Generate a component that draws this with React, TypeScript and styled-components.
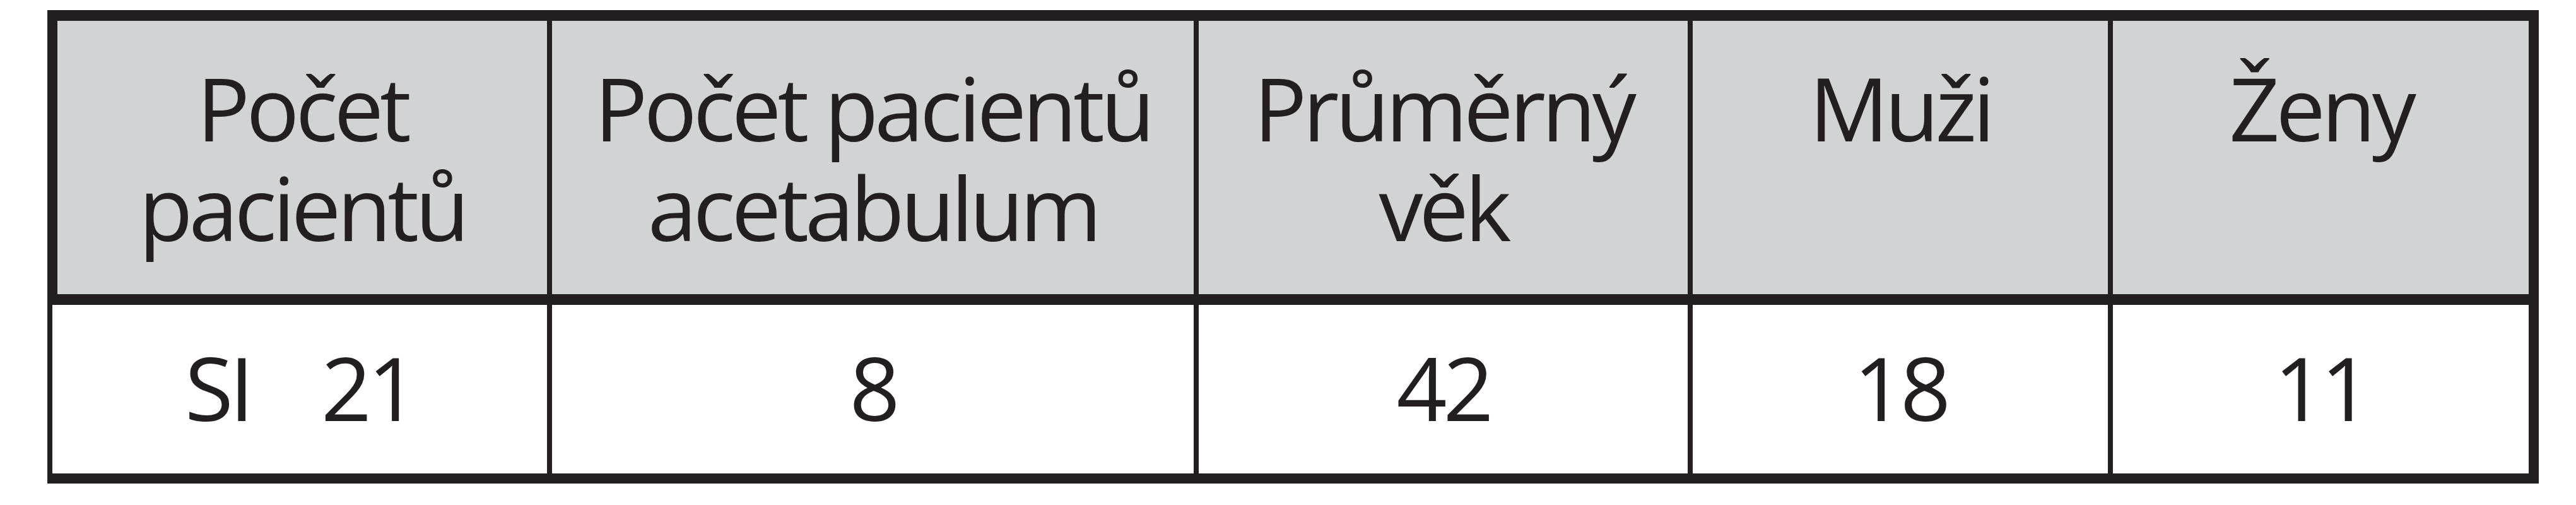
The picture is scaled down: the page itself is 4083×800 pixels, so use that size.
import React from "react";
import styled, { createGlobalStyle } from "styled-components";

const GlobalStyle = createGlobalStyle`
  html, body {
    margin: 0;
    padding: 0;
    background: #ffffff;
  }
  body {
    font-family: "Open Sans", "Noto Sans", "DejaVu Sans", sans-serif;
    color: #231f20;
  }
`;

const Page = styled.div`
  padding: 16px 0 0 75px;
  width: 4083px;
  height: 800px;
  box-sizing: border-box;
  background: #ffffff;
`;

const Table = styled.div`
  display: grid;
  width: 3949px;
  box-sizing: border-box;
  grid-template-columns: 784px 1017px 775px 658px 659px;
  grid-template-rows: 433px 267px;
  column-gap: 8px;
  row-gap: 17px;
  background: #231f20;
  border-style: solid;
  border-color: #231f20;
  border-width: 17px 16px 16px 8px;
`;

const HeadCell = styled.div<{ $first?: boolean }>`
  background: #d1d3d4;
  box-sizing: border-box;
  border-left: ${(p) => (p.$first ? "8px solid #231f20" : "none")};
  padding-top: 58px;
  display: flex;
  flex-direction: column;
  align-items: center;
  font-size: 140px;
  line-height: 158px;
  letter-spacing: -6px;
  color: #231f20;
  white-space: nowrap;
`;

const Line = styled.span`
  display: block;
  text-align: center;
`;

const BodyCell = styled.div`
  background: #ffffff;
  box-sizing: border-box;
  padding-bottom: 8px;
  display: flex;
  align-items: center;
  justify-content: center;
  font-size: 140px;
  letter-spacing: -6px;
  color: #231f20;
  white-space: nowrap;
`;

const Pair = styled.span`
  display: flex;
  gap: 112px;
`;

const headers: string[][] = [
  ["Počet", "pacientů"],
  ["Počet pacientů", "acetabulum"],
  ["Průměrný", "věk"],
  ["Muži"],
  ["Ženy"],
];

const values = ["8", "42", "18", "11"];

export default function App() {
  return (
    <>
      <GlobalStyle />
      <Page>
        <Table>
          {headers.map((lines, i) => (
            <HeadCell key={i} $first={i === 0}>
              {lines.map((l) => (
                <Line key={l}>{l}</Line>
              ))}
            </HeadCell>
          ))}
          <BodyCell>
            <Pair>
              <span>SI</span>
              <span>21</span>
            </Pair>
          </BodyCell>
          {values.map((v, i) => (
            <BodyCell key={i}>{v}</BodyCell>
          ))}
        </Table>
      </Page>
    </>
  );
}
